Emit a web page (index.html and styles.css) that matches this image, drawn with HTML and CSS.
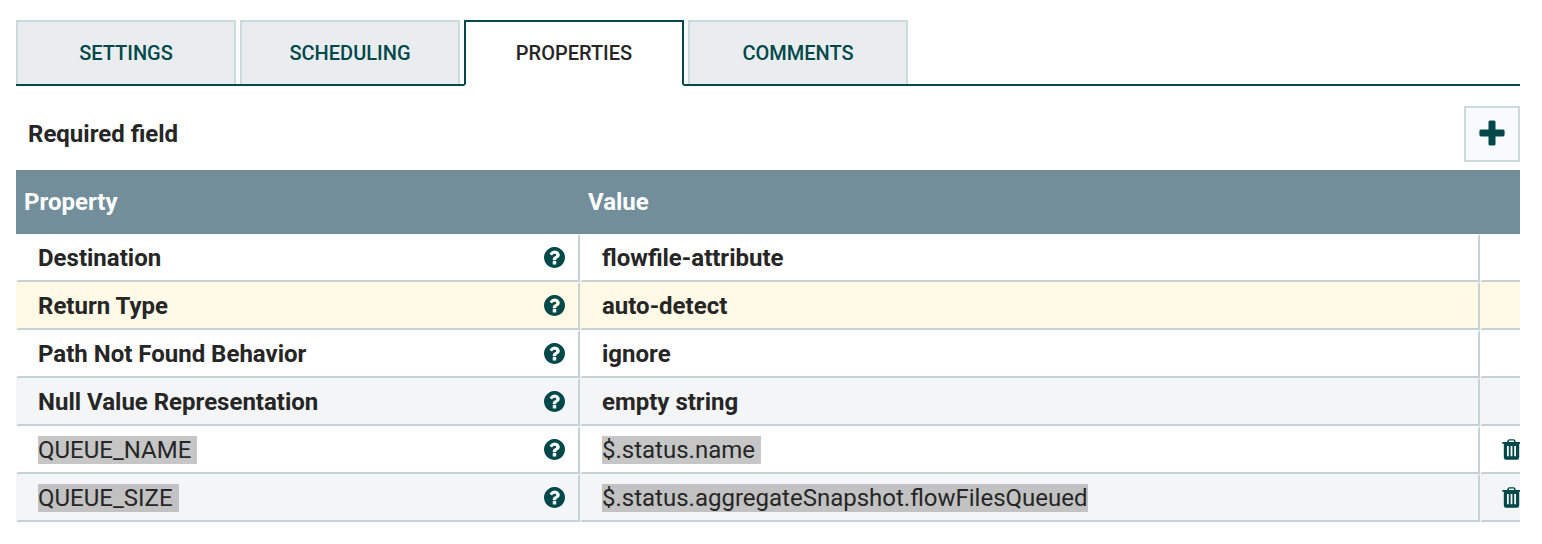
FILE: index.html
```
<!DOCTYPE html>
<html lang="en">
<head>
<meta charset="utf-8">
<title>Processor properties</title>
<link rel="stylesheet" href="styles.css">
</head>
<body>
<svg class="defs" aria-hidden="true">
  <symbol id="help" viewBox="128 128 1536 1536"><path d="M1024 1376v-192q0-14-9-23t-23-9h-192q-14 0-23 9t-9 23v192q0 14 9 23t23 9h192q14 0 23-9t9-23zm256-672q0-88-55.5-163t-138.5-116-170-41q-243 0-371 213-15 24 8 42l132 100q7 6 19 6 16 0 25-12 53-68 86-92 34-24 86-24 48 0 85.5 26t37.5 59q0 38-20 61t-68 45q-63 28-115.5 86.5t-52.5 125.5v36q0 14 9 23t23 9h192q14 0 23-9t9-23q0-19 21.5-49.5t54.5-49.5q32-18 49-28.5t46-35 44.5-48 28-60.5 12.5-81zm384 192q0 209-103 385.5t-279.5 279.5-385.5 103-385.5-103-279.5-279.5-103-385.5 103-385.5 279.5-279.5 385.5-103 385.5 103 279.5 279.5 103 385.5z"/></symbol>
  <symbol id="trash" viewBox="0 0 19 21"><path fill-rule="evenodd" d="M0.300 3H5L5.800 1.200Q6.300 0.200 7.500 0.200H11.500Q12.700 0.200 13.200 1.200L14 3H18.700V4.700H17.200V18.300Q17.200 20.800 15 20.800H4Q1.800 20.800 1.800 18.300V4.700H0.300ZM6.700 3H12.300L11.700 1.600H7.300ZM5 7V17.300H6.800V7ZM8.600 7V17.300H10.400V7ZM12.200 7V17.300H14V7Z"/></symbol>
</svg>
<nav class="tabs">
  <div class="tab">SETTINGS</div>
  <div class="tab">SCHEDULING</div>
  <div class="tab selected">PROPERTIES</div>
  <div class="tab">COMMENTS</div>
</nav>
<div class="toolbar">
  <span class="required">Required field</span>
  <button class="add" aria-label="Add property"><svg width="26" height="26" viewBox="0 0 26 26"><path d="M11 0.500h4q1.500 0 1.500 1.500v7.500h7.500q1.600 0 1.600 1.600v3.700q0 1.600-1.600 1.600h-7.500v7.500q0 1.600-1.500 1.600h-4q-1.500 0-1.500-1.600v-7.500H2q-1.600 0-1.600-1.600v-3.700q0-1.600 1.600-1.600h7.500V2q0-1.500 1.500-1.500z"/></svg></button>
</div>
<main class="grid">
  <div class="row header"><div>Property</div><div>Value</div><div></div></div>
  <div class="row"><div class="cell"><span>Destination</span><svg class="help"><use href="#help"/></svg></div><div class="cell">flowfile-attribute</div><div class="cell"></div></div>
  <div class="row hover"><div class="cell"><span>Return Type</span><svg class="help"><use href="#help"/></svg></div><div class="cell">auto-detect</div><div class="cell"></div></div>
  <div class="row"><div class="cell"><span>Path Not Found Behavior</span><svg class="help"><use href="#help"/></svg></div><div class="cell">ignore</div><div class="cell"></div></div>
  <div class="row odd"><div class="cell"><span>Null Value Representation</span><svg class="help"><use href="#help"/></svg></div><div class="cell">empty string</div><div class="cell"></div></div>
  <div class="row optional"><div class="cell"><span class="mark">QUEUE_NAME </span><svg class="help"><use href="#help"/></svg></div><div class="cell"><span class="mark">$.status.name </span></div><div class="cell"><svg class="trash"><use href="#trash"/></svg></div></div>
  <div class="row odd optional"><div class="cell"><span class="mark">QUEUE_SIZE </span><svg class="help"><use href="#help"/></svg></div><div class="cell"><span class="mark">$.status.aggregateSnapshot.flowFilesQueued</span></div><div class="cell"><svg class="trash"><use href="#trash"/></svg></div></div>
</main>
</body>
</html>
```
FILE: styles.css
```
* { box-sizing: border-box; }
body { margin: 0; padding: 20px 22px 0 16px; background: #fff; color: #262626; font: 24px/28px Roboto, sans-serif; }
svg { display: block; fill: #004849; flex: none; }
.defs { width: 0; height: 0; position: absolute; }
.tabs { display: flex; gap: 4px; height: 66px; border-bottom: 2px solid #004849; }
.tab { width: 220px; height: 64px; border: 2px solid #ccdadb; border-bottom: 0; background: #e9edf0; color: #004849; font-size: 20px; font-weight: 500; line-height: 62px; text-align: center; }
.tab.selected { height: 66px; border-color: #004849; border-bottom: 2px solid #fff; background: #fff; color: #262626; }
.toolbar { display: flex; justify-content: space-between; align-items: center; height: 84px; padding: 12px 0 0 12px; }
.required { font-weight: 700; }
.add { width: 56px; height: 56px; padding: 0 0 2px; border: 2px solid #ccdadb; background: #f9fafc; display: flex; align-items: center; justify-content: center; }
.row { display: grid; grid-template-columns: 564px 900px 40px; height: 48px; font-weight: 700; background: #fff; }
.header { height: 64px; line-height: 64px; background: #728e9b; color: #fff; padding-left: 8px; }
.cell { display: flex; align-items: center; justify-content: space-between; overflow: hidden; border: 2px solid transparent; border-right-color: #c7d2d7; border-bottom-color: #c7d2d7; padding: 0 13px 0 20px; }
.cell:last-child { border-right: 0; padding-right: 0; }
.hover { background: #fffae6; }
.odd { background: #f4f5f7; }
.optional { font-weight: 400; }
.help { width: 21px; height: 21px; margin-bottom: 1px; }
.mark { background: #c6c6c6; white-space: pre; }
.odd .mark { background: #c2c2c2; }
.trash { width: 19px; height: 21px; margin-bottom: 1px; }
```
